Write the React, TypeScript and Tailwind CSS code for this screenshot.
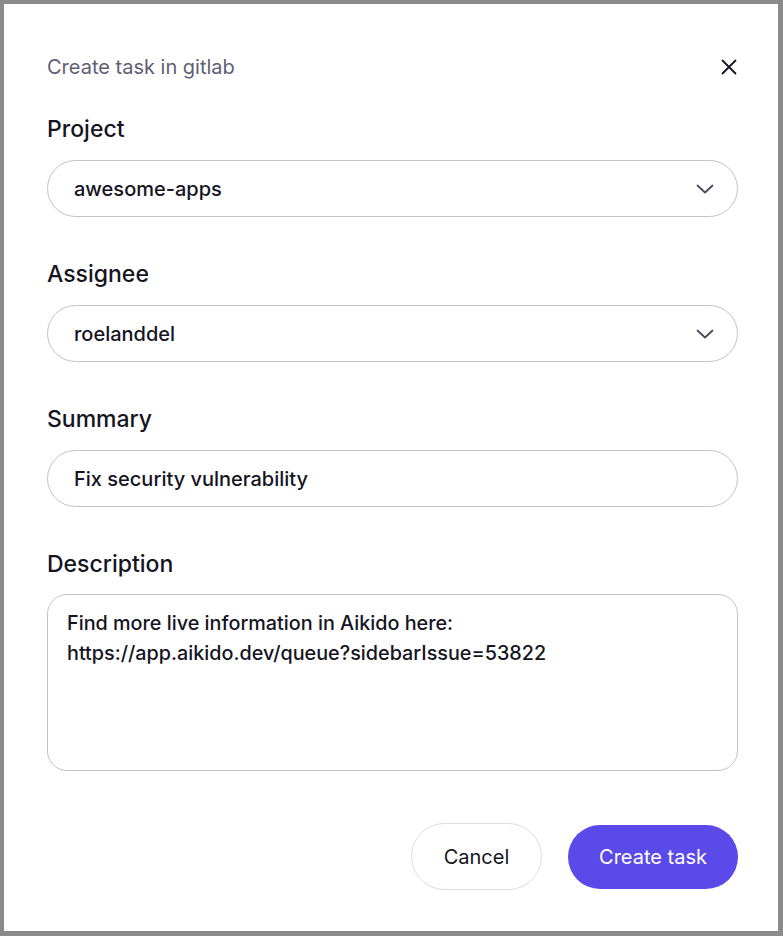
import React from "react";

function Chevron() {
  return (
    <svg width="18" height="10" viewBox="0 0 18 10" fill="none" className="ml-auto mr-[-1px] text-[#4b4a5c]">
      <path d="M1.5 1.5 9 8.5 16.5 1.5" stroke="currentColor" strokeWidth="1.8" strokeLinecap="round" strokeLinejoin="round" />
    </svg>
  );
}

function Label({ children, className = "" }: { children: React.ReactNode; className?: string }) {
  return <div className={`text-[23px] leading-[28px] font-medium text-[#15141f] ${className}`}>{children}</div>;
}

function SelectBox({ value }: { value: string }) {
  return (
    <div className="mt-[17px] flex h-[57px] items-center justify-between rounded-full border border-[#c3c2cc] pl-[26px] pr-[24px]">
      <span className="text-[20px] font-medium text-[#15141f]">{value}</span>
      <Chevron />
    </div>
  );
}

export default function App() {
  return (
    <div className="h-[936px] w-[783px] bg-[#8b8b8b] pt-[4px] pl-[4px] pr-[5px] pb-[5px]" style={{ fontFamily: "Inter, 'Noto Sans', sans-serif" }}>
      <div className="h-full w-full bg-white pl-[43px] pr-[40px] pt-[51px]">
        {/* header */}
        <div className="flex items-center justify-between">
          <h1 className="text-[20px] leading-[24px] text-[#5f5e74]">Create task in gitlab</h1>
          <svg width="16" height="16" viewBox="0 0 16 16" fill="none" className="mr-[1px] text-[#15141f]">
            <path d="M1.5 1.5 14.5 14.5M14.5 1.5 1.5 14.5" stroke="currentColor" strokeWidth="1.8" strokeLinecap="round" />
          </svg>
        </div>

        <Label className="mt-[36px]">Project</Label>
        <SelectBox value="awesome-apps" />

        <Label className="mt-[43px]">Assignee</Label>
        <SelectBox value="roelanddel" />

        <Label className="mt-[43px]">Summary</Label>
        <div className="mt-[17px] flex h-[57px] items-center rounded-full border border-[#c3c2cc] pl-[26px]">
          <span className="text-[20px] font-medium text-[#15141f]">Fix security vulnerability</span>
        </div>

        <Label className="mt-[43px]">Description</Label>
        <div className="mt-[16px] h-[177px] rounded-[20px] border border-[#c3c2cc] pl-[19px] pt-[13px] text-[19.8px] font-medium leading-[30px] text-[#15141f]">
          <div>Find more live information in Aikido here:</div>
          <div>https://app.aikido.dev/queue?sidebarIssue=53822</div>
        </div>

        {/* actions */}
        <div className="mt-[52px] flex items-center justify-end gap-[26px]">
          <button className="h-[67px] w-[131px] rounded-full border border-[#dddce3] bg-white text-[20px] text-[#15141f]">
            Cancel
          </button>
          <button className="h-[64px] w-[170px] rounded-full bg-[#5b4ae9] text-[20px] text-white">
            Create task
          </button>
        </div>
      </div>
    </div>
  );
}
